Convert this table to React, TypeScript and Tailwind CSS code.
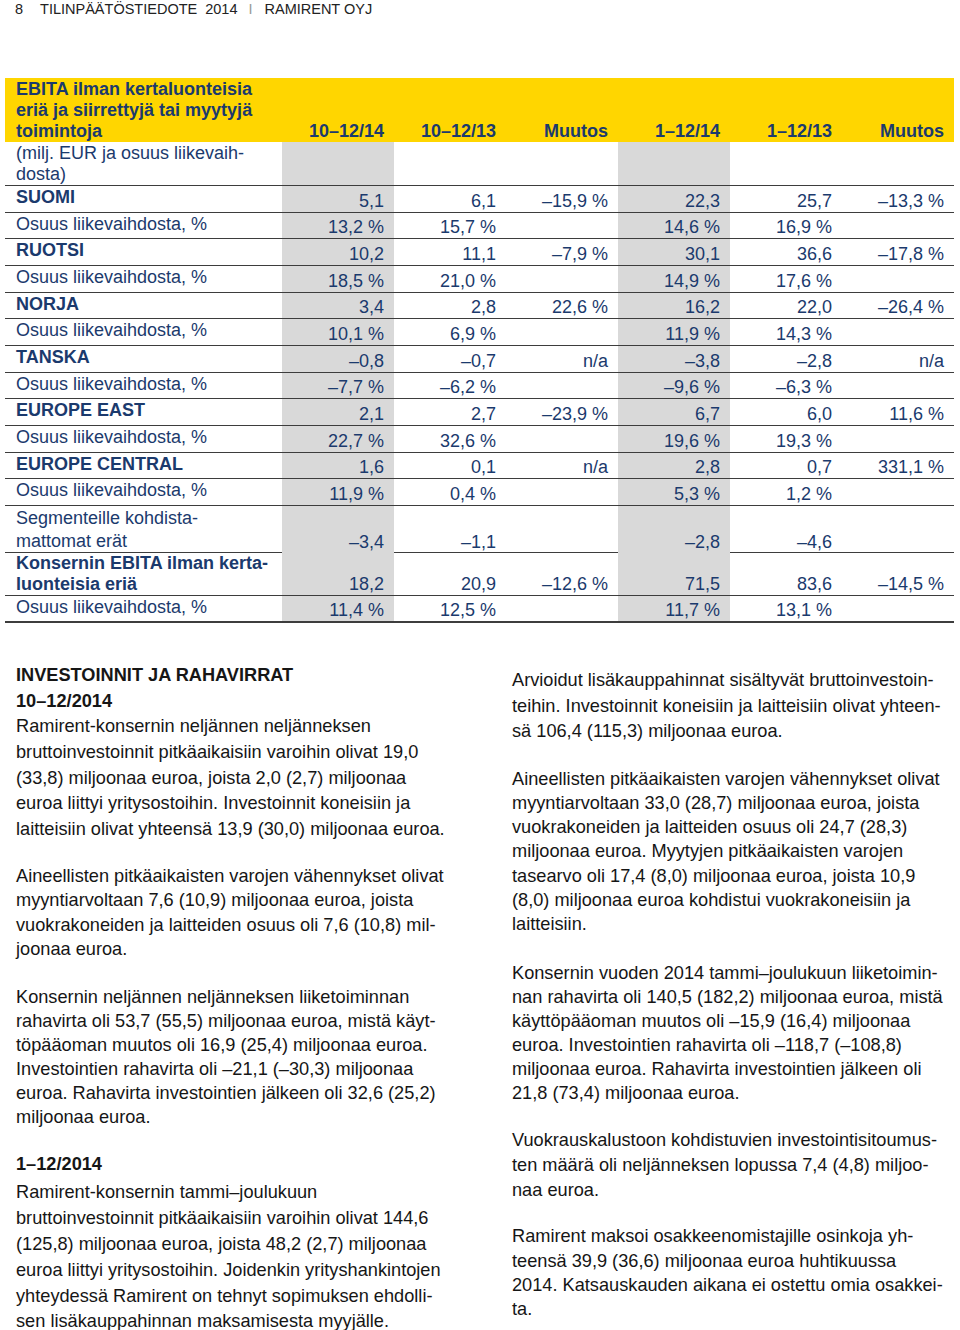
import React from "react";

type Row = {
  label: string[];
  bold?: boolean;
  v: string[];
  h: string;
  pt: string;
  lh: string;
  last?: boolean;
};

const R = "h-[26.67px]";

const ROWS: Row[] = [
  { label: ["SUOMI"], bold: true, v: ["5,1", "6,1", "–15,9 %", "22,3", "25,7", "–13,3 %"], h: R, pt: "pt-[1px]", lh: "leading-[21px]" },
  { label: ["Osuus liikevaihdosta, %"], v: ["13,2 %", "15,7 %", "", "14,6 %", "16,9 %", ""], h: R, pt: "pt-[1px]", lh: "leading-[21px]" },
  { label: ["RUOTSI"], bold: true, v: ["10,2", "11,1", "–7,9 %", "30,1", "36,6", "–17,8 %"], h: R, pt: "pt-[1px]", lh: "leading-[21px]" },
  { label: ["Osuus liikevaihdosta, %"], v: ["18,5 %", "21,0 %", "", "14,9 %", "17,6 %", ""], h: R, pt: "pt-[1px]", lh: "leading-[21px]" },
  { label: ["NORJA"], bold: true, v: ["3,4", "2,8", "22,6 %", "16,2", "22,0", "–26,4 %"], h: R, pt: "pt-[1px]", lh: "leading-[21px]" },
  { label: ["Osuus liikevaihdosta, %"], v: ["10,1 %", "6,9 %", "", "11,9 %", "14,3 %", ""], h: R, pt: "pt-[1px]", lh: "leading-[21px]" },
  { label: ["TANSKA"], bold: true, v: ["–0,8", "–0,7", "n/a", "–3,8", "–2,8", "n/a"], h: R, pt: "pt-[1px]", lh: "leading-[21px]" },
  { label: ["Osuus liikevaihdosta, %"], v: ["–7,7 %", "–6,2 %", "", "–9,6 %", "–6,3 %", ""], h: R, pt: "pt-[1px]", lh: "leading-[21px]" },
  { label: ["EUROPE EAST"], bold: true, v: ["2,1", "2,7", "–23,9 %", "6,7", "6,0", "11,6 %"], h: R, pt: "pt-[1px]", lh: "leading-[21px]" },
  { label: ["Osuus liikevaihdosta, %"], v: ["22,7 %", "32,6 %", "", "19,6 %", "19,3 %", ""], h: R, pt: "pt-[1px]", lh: "leading-[21px]" },
  { label: ["EUROPE CENTRAL"], bold: true, v: ["1,6", "0,1", "n/a", "2,8", "0,7", "331,1 %"], h: R, pt: "pt-[1px]", lh: "leading-[21px]" },
  { label: ["Osuus liikevaihdosta, %"], v: ["11,9 %", "0,4 %", "", "5,3 %", "1,2 %", ""], h: R, pt: "pt-[1px]", lh: "leading-[21px]" },
  { label: ["Segmenteille kohdista-", "mattomat erät"], v: ["–3,4", "–1,1", "", "–2,8", "–4,6", ""], h: "h-[47px]", pt: "pt-[1px]", lh: "leading-[23px]" },
  { label: ["Konsernin EBITA ilman kerta-", "luonteisia eriä"], bold: true, v: ["18,2", "20,9", "–12,6 %", "71,5", "83,6", "–14,5 %"], h: "h-[43px]", pt: "pt-0", lh: "leading-[21px]" },
  { label: ["Osuus liikevaihdosta, %"], v: ["11,4 %", "12,5 %", "", "11,7 %", "13,1 %", ""], h: "h-[27px]", pt: "pt-[1px]", lh: "leading-[21px]", last: true },
];

const COLS = "grid grid-cols-[277px_112px_112px_112px_112px_112px_112px]";
const HEAD = ["10–12/14", "10–12/13", "Muutos", "1–12/14", "1–12/13", "Muutos"];

const DataRow = ({ row }: { row: Row }) => (
  <div
    className={`${COLS} ${row.h} ${
      row.last ? "border-b-2" : "border-b"
    } border-[#3d3d3d]`}
  >
    <div className={`pl-[11px] ${row.pt} ${row.lh} ${row.bold ? "font-bold" : ""}`}>
      {row.label.map((l) => (
        <div key={l} className="whitespace-nowrap">
          {l}
        </div>
      ))}
    </div>
    {row.v.map((v, i) => (
      <div
        key={i}
        className={`flex items-end justify-end pr-[10px] leading-[21px] whitespace-nowrap ${
          i === 0 || i === 3 ? "bg-[#d9d9d9]" : ""
        }`}
      >
        {v}
      </div>
    ))}
  </div>
);

const Lines = ({ lines, className }: { lines: string[]; className: string }) => (
  <div className={className}>
    {lines.map((l, i) => (
      <div key={i} className="whitespace-nowrap">
        {l}
      </div>
    ))}
  </div>
);

export default function App() {
  return (
    <div className="w-[960px] h-[1330px] bg-white overflow-hidden font-['Liberation_Sans',Arial,sans-serif]">
      {/* running header */}
      <div className="flex items-center pl-[15px] pt-[1px] h-[18px] text-[14.5px] leading-[17px] text-[#222]">
        <span>8</span>
        <span className="ml-[17px]">TILINPÄÄTÖSTIEDOTE</span>
        <span className="ml-[8px]">2014</span>
        <span className="ml-[11px] text-[#999]">I</span>
        <span className="ml-[12px]">RAMIRENT OYJ</span>
      </div>

      {/* table */}
      <div className="mt-[60px] ml-[5px] w-[949px] text-[18px] text-[#1b3a6d]">
        <div className={`${COLS} h-[64px] bg-[#ffd600] font-bold leading-[21px]`}>
          <div className="pl-[11px] pt-[0.5px]">
            <div className="whitespace-nowrap">EBITA ilman kertaluonteisia</div>
            <div className="whitespace-nowrap">eriä ja siirrettyjä tai myytyjä</div>
            <div className="whitespace-nowrap">toimintoja</div>
          </div>
          {HEAD.map((h, i) => (
            <div key={i} className="flex items-end justify-end pr-[10px] whitespace-nowrap">
              {h}
            </div>
          ))}
        </div>
        <div className={`${COLS} h-[44px] border-b border-[#3d3d3d]`}>
          <div className="pl-[11px] pt-[1px] leading-[21px]">
            <div>(milj. EUR ja osuus liikevaih-</div>
            <div>dosta)</div>
          </div>
          <div className="bg-[#d9d9d9]" />
          <div />
          <div />
          <div className="bg-[#d9d9d9]" />
          <div />
          <div />
        </div>
        {ROWS.map((r, i) => (
          <DataRow key={i} row={r} />
        ))}
      </div>

      {/* text columns */}
      <div className="flex mt-[40px] pl-[16px] text-[18.2px] text-[#161616]">
        <div className="w-[496px]">
          <div className="leading-[25.7px]">
            <div className="font-bold">INVESTOINNIT JA RAHAVIRRAT</div>
            <div className="font-bold">10–12/2014</div>
            <Lines
              className=""
              lines={[
                "Ramirent-konsernin neljännen neljänneksen",
                "bruttoinvestoinnit pitkäaikaisiin varoihin olivat 19,0",
                "(33,8) miljoonaa euroa, joista 2,0 (2,7) miljoonaa",
                "euroa liittyi yritysostoihin. Investoinnit koneisiin ja",
                "laitteisiin olivat yhteensä 13,9 (30,0) miljoonaa euroa.",
              ]}
            />
          </div>
          <Lines
            className="mt-[21px] leading-[24.4px]"
            lines={[
              "Aineellisten pitkäaikaisten varojen vähennykset olivat",
              "myyntiarvoltaan 7,6 (10,9) miljoonaa euroa, joista",
              "vuokrakoneiden ja laitteiden osuus oli 7,6 (10,8) mil-",
              "joonaa euroa.",
            ]}
          />
          <Lines
            className="mt-[24px] leading-[24px]"
            lines={[
              "Konsernin neljännen neljänneksen liiketoiminnan",
              "rahavirta oli 53,7 (55,5) miljoonaa euroa, mistä käyt-",
              "töpääoman muutos oli 16,9 (25,4) miljoonaa euroa.",
              "Investointien rahavirta oli –21,1 (–30,3) miljoonaa",
              "euroa. Rahavirta investointien jälkeen oli 32,6 (25,2)",
              "miljoonaa euroa.",
            ]}
          />
          <div className="mt-[22.5px] font-bold leading-[25.5px]">1–12/2014</div>
          <Lines
            className="mt-[3px] leading-[25.8px]"
            lines={[
              "Ramirent-konsernin tammi–joulukuun",
              "bruttoinvestoinnit pitkäaikaisiin varoihin olivat 144,6",
              "(125,8) miljoonaa euroa, joista 48,2 (2,7) miljoonaa",
              "euroa liittyi yritysostoihin. Joidenkin yrityshankintojen",
              "yhteydessä Ramirent on tehnyt sopimuksen ehdolli-",
              "sen lisäkauppahinnan maksamisesta myyjälle.",
            ]}
          />
        </div>
        <div className="flex-1 pt-[5px]">
          <Lines
            className="leading-[25.8px]"
            lines={[
              "Arvioidut lisäkauppahinnat sisältyvät bruttoinvestoin-",
              "teihin. Investoinnit koneisiin ja laitteisiin olivat yhteen-",
              "sä 106,4 (115,3) miljoonaa euroa.",
            ]}
          />
          <Lines
            className="mt-[21.5px] leading-[24.2px]"
            lines={[
              "Aineellisten pitkäaikaisten varojen vähennykset olivat",
              "myyntiarvoltaan 33,0 (28,7) miljoonaa euroa, joista",
              "vuokrakoneiden ja laitteiden osuus oli 24,7 (28,3)",
              "miljoonaa euroa. Myytyjen pitkäaikaisten varojen",
              "tasearvo oli 17,4 (8,0) miljoonaa euroa, joista 10,9",
              "(8,0) miljoonaa euroa kohdistui vuokrakoneisiin ja",
              "laitteisiin.",
            ]}
          />
          <Lines
            className="mt-[24.4px] leading-[24px]"
            lines={[
              "Konsernin vuoden 2014 tammi–joulukuun liiketoimin-",
              "nan rahavirta oli 140,5 (182,2) miljoonaa euroa, mistä",
              "käyttöpääoman muutos oli –15,9 (16,4) miljoonaa",
              "euroa. Investointien rahavirta oli –118,7 (–108,8)",
              "miljoonaa euroa. Rahavirta investointien jälkeen oli",
              "21,8 (73,4) miljoonaa euroa.",
            ]}
          />
          <Lines
            className="mt-[23.8px] leading-[25px]"
            lines={[
              "Vuokrauskalustoon kohdistuvien investointisitoumus-",
              "ten määrä oli neljänneksen lopussa 7,4 (4,8) miljoo-",
              "naa euroa.",
            ]}
          />
          <Lines
            className="mt-[20.8px] leading-[24.4px]"
            lines={[
              "Ramirent maksoi osakkeenomistajille osinkoja yh-",
              "teensä 39,9 (36,6) miljoonaa euroa huhtikuussa",
              "2014. Katsauskauden aikana ei ostettu omia osakkei-",
              "ta.",
            ]}
          />
        </div>
      </div>
    </div>
  );
}
